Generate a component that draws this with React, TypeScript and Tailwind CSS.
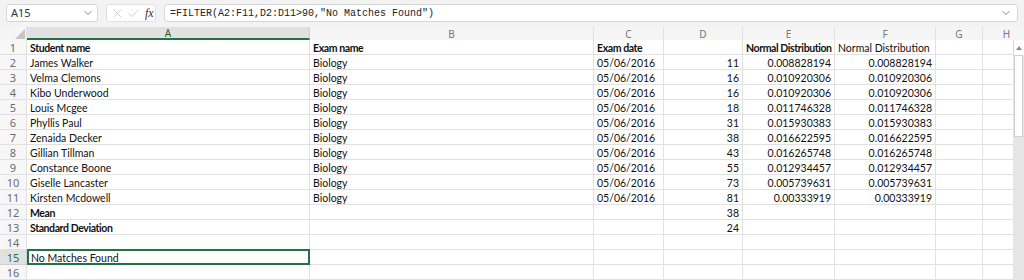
import React from "react";
import { ChevronDown, X, Check } from "lucide-react";

type Cell = { t: string; b?: boolean; r?: boolean };

const rows: Cell[][] = [
  [{ t: "Student name", b: true }, { t: "Exam name", b: true }, { t: "Exam date", b: true }, { t: "" }, { t: "Normal Distribution", b: true }, { t: "Normal Distribution" }],
  [{ t: "James Walker" }, { t: "Biology" }, { t: "05/06/2016" }, { t: "11", r: true }, { t: "0.008828194", r: true }, { t: "0.008828194", r: true }],
  [{ t: "Velma Clemons" }, { t: "Biology" }, { t: "05/06/2016" }, { t: "16", r: true }, { t: "0.010920306", r: true }, { t: "0.010920306", r: true }],
  [{ t: "Kibo Underwood" }, { t: "Biology" }, { t: "05/06/2016" }, { t: "16", r: true }, { t: "0.010920306", r: true }, { t: "0.010920306", r: true }],
  [{ t: "Louis Mcgee" }, { t: "Biology" }, { t: "05/06/2016" }, { t: "18", r: true }, { t: "0.011746328", r: true }, { t: "0.011746328", r: true }],
  [{ t: "Phyllis Paul" }, { t: "Biology" }, { t: "05/06/2016" }, { t: "31", r: true }, { t: "0.015930383", r: true }, { t: "0.015930383", r: true }],
  [{ t: "Zenaida Decker" }, { t: "Biology" }, { t: "05/06/2016" }, { t: "38", r: true }, { t: "0.016622595", r: true }, { t: "0.016622595", r: true }],
  [{ t: "Gillian Tillman" }, { t: "Biology" }, { t: "05/06/2016" }, { t: "43", r: true }, { t: "0.016265748", r: true }, { t: "0.016265748", r: true }],
  [{ t: "Constance Boone" }, { t: "Biology" }, { t: "05/06/2016" }, { t: "55", r: true }, { t: "0.012934457", r: true }, { t: "0.012934457", r: true }],
  [{ t: "Giselle Lancaster" }, { t: "Biology" }, { t: "05/06/2016" }, { t: "73", r: true }, { t: "0.005739631", r: true }, { t: "0.005739631", r: true }],
  [{ t: "Kirsten Mcdowell" }, { t: "Biology" }, { t: "05/06/2016" }, { t: "81", r: true }, { t: "0.00333919", r: true }, { t: "0.00333919", r: true }],
  [{ t: "Mean", b: true }, { t: "" }, { t: "" }, { t: "38", r: true }, { t: "" }, { t: "" }],
  [{ t: "Standard Deviation", b: true }, { t: "" }, { t: "" }, { t: "24", r: true }, { t: "" }, { t: "" }],
  [{ t: "" }, { t: "" }, { t: "" }, { t: "" }, { t: "" }, { t: "" }],
  [{ t: "No Matches Found" }, { t: "" }, { t: "" }, { t: "" }, { t: "" }, { t: "" }],
  [{ t: "" }, { t: "" }, { t: "" }, { t: "" }, { t: "" }, { t: "" }],
];

const headers = ["A", "B", "C", "D", "E", "F", "G", "H"];

const uiFont = { fontFamily: '"Noto Sans", "Open Sans", sans-serif' };
const cellFont = { fontFamily: 'Lato, "Open Sans", sans-serif' };

export default function App() {
  return (
    <div className="w-[1024px] h-[280px] overflow-hidden bg-white flex flex-col">
      {/* Formula bar */}
      <div className="h-[27px] shrink-0 bg-[#f3f3f3] flex items-start pt-[4px] pl-[6px] pr-[6px] gap-[8px]">
        <div className="w-[92px] h-[18px] bg-white border border-[#d6d6d6] rounded-[3px] flex items-center justify-between pl-[4px] pr-[3px]">
          <span className="text-[11px] text-[#333]" style={uiFont}>A15</span>
          <ChevronDown size={12} strokeWidth={1.5} className="text-[#555]" />
        </div>
        <div className="w-[50px] h-[18px] bg-white border border-[#e0e0e0] rounded-[3px] flex items-center pl-[3px] gap-[1px]">
          <X size={15} strokeWidth={1} className="text-[#b8b8b8]" />
          <Check size={15} strokeWidth={1} className="text-[#b8b8b8]" />
          <span className="text-[12px] italic text-[#333] ml-[3px] leading-none" style={{ fontFamily: '"Liberation Serif", serif' }}>fx</span>
        </div>
        <div className="flex-1 h-[18px] bg-white border border-[#d6d6d6] rounded-[3px] flex items-center justify-between pl-[5px] pr-[5px]">
          <span className="text-[10px] text-[#222] whitespace-pre" style={{ fontFamily: '"Liberation Mono", monospace' }}>=FILTER(A2:F11,D2:D11&gt;90,"No Matches Found")</span>
          <ChevronDown size={12} strokeWidth={1.5} className="text-[#555]" />
        </div>
      </div>

      {/* Column headers */}
      <div className="h-[13px] shrink-0 overflow-hidden">
        <div className="grid grid-cols-[27px_283px_284px_70px_79px_92px_101px_47px_48px] h-[13px] bg-[#f5f5f5]">
          <div className="relative border-r border-[#e1e1e1]">
            <svg className="absolute right-[1px] bottom-[1px]" width="10" height="10" viewBox="0 0 10 10">
              <polygon points="10,0 10,10 0,10" fill="#c4c4c4" />
            </svg>
          </div>
          {headers.map((h, i) => (
            <div
              key={h}
              className={
                i === 0
                  ? "bg-[#e1e1e1] border-r border-[#d0d0d0] border-b-2 border-b-[#217346] flex items-center justify-center pt-[1px] text-[10px] text-[#1e5c36] leading-none"
                  : "border-r border-[#e1e1e1] flex items-center justify-center pt-[1px] text-[10px] text-[#777] leading-none"
              }
              style={uiFont}
            >
              {h}
            </div>
          ))}
        </div>
      </div>

      {/* Body */}
      <div className="flex flex-1 min-h-0">
        <div className="w-[1013px] overflow-hidden">
          {rows.map((row, ri) => {
            const sel = ri === 14;
            return (
              <div key={ri} className="grid grid-cols-[27px_283px_284px_70px_79px_92px_101px_47px_30px] h-[15px]">
                <div
                  className={
                    sel
                      ? "bg-[#e1e1e1] border-r border-b border-[#d0d0d0] flex items-center justify-center pt-[1px] text-[11px] text-[#217346] leading-none"
                      : "bg-[#f7f7f7] border-r border-b border-[#e1e1e1] flex items-center justify-center pt-[1px] text-[11px] text-[#6b6b6b] leading-none"
                  }
                  style={uiFont}
                >
                  {ri + 1}
                </div>
                {row.map((c, ci) => {
                  const isSel = sel && ci === 0;
                  return (
                    <div
                      key={ci}
                      className={
                        (isSel
                          ? "relative border-2 border-[#217346] -mt-[1px] h-[16px] pl-[2px] "
                          : "border-r border-b border-[#e1e1e1] pl-[3px] pt-[1px] ") +
                        (c.r ? "text-right pr-[3px] " : "") +
                        (c.b ? "font-bold tracking-[-0.4px] " : "") +
                        "text-[10.5px] leading-[14px] text-[#111] whitespace-nowrap overflow-hidden"
                      }
                      style={cellFont}
                    >
                      {c.t}
                      {isSel && (
                        <div className="absolute -right-[3px] -bottom-[3px] w-[4px] h-[4px] bg-[#217346] border border-white" />
                      )}
                    </div>
                  );
                })}
                <div className="border-r border-b border-[#e1e1e1]" />
                <div className="border-b border-[#e1e1e1]" />
              </div>
            );
          })}
        </div>
        {/* Scrollbar */}
        <div className="w-[11px] bg-[#e6e6e6] flex flex-col">
          <div className="h-[15px] bg-white border-l border-[#d6d6d6] flex items-center justify-center">
            <svg width="6" height="4" viewBox="0 0 6 4">
              <polygon points="3,0 6,4 0,4" fill="#8a8a8a" />
            </svg>
          </div>
          <div className="h-[82px] bg-white border border-[#d0d0d0] mx-[1px]" />
        </div>
      </div>
    </div>
  );
}
